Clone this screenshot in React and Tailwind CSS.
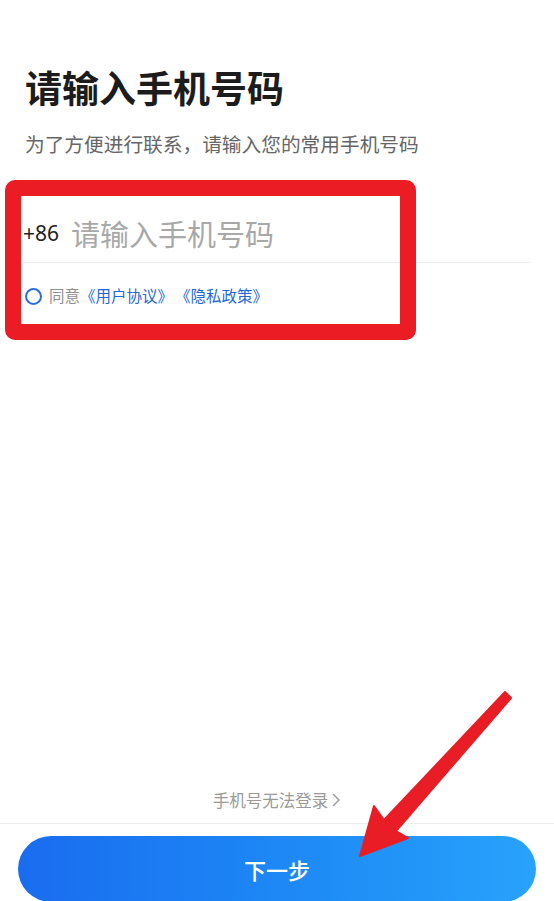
import React from "react";

export default function App() {
  const font = { fontFamily: '"Noto Sans CJK SC", "Noto Sans", sans-serif' };
  return (
    <div
      className="relative h-[901px] w-full overflow-hidden bg-white flex flex-col"
      style={font}
    >
      <div className="px-[25px] pt-[63px]">
        <h1 className="text-[37px] leading-[48px] font-bold text-[#1c1c1c]">
          请输入手机号码
        </h1>
        <p className="mt-[19px] text-[19.7px] leading-[28px] text-[#666666]">
          为了方便进行联系，请输入您的常用手机号码
        </p>
      </div>

      <div className="ml-[23px] mr-[24px] mt-[46px] flex items-center h-[59px] border-b border-[#ececec]">
        <span className="text-[21px] text-[#222222] leading-none" style={{ fontFamily: '"Noto Sans", "Noto Sans CJK SC", sans-serif' }}>+86</span>
        <span className="ml-[12px] text-[29px] text-[#a8a8a8] leading-none">请输入手机号码</span>
      </div>

      <div className="ml-[25px] mt-[22px] flex items-center h-[22px]">
        <span className="w-[17px] h-[17px] rounded-full border-2 border-[#2a6fd8] box-border" />
        <span className="ml-[7px] text-[15.5px] text-[#8f8f8f] leading-none">同意</span>
        <span className="text-[15.5px] text-[#2468d6] leading-none">《用户协议》</span>
        <span className="text-[15.5px] text-[#2468d6] leading-none ml-[2px]">《隐私政策》</span>
      </div>

      <div className="flex-1" />

      <div className="flex items-center justify-center h-[24px] mb-[11px]">
        <span className="text-[16.5px] text-[#9a9a9a] leading-none">手机号无法登录</span>
        <svg width="10" height="16" viewBox="0 0 10 16" className="ml-[3px]">
          <path d="M2 2 L8 8 L2 14" fill="none" stroke="#9a9a9a" strokeWidth="1.4" />
        </svg>
      </div>
      <div className="border-t border-[#ededed]" />
      <div className="px-[18px] pt-[12px] mb-[-1px]">
        <button className="w-full h-[66px] rounded-full bg-gradient-to-r from-[#1a6cef] to-[#28a2fb] text-white text-[22px] font-medium flex items-center justify-center">
          下一步
        </button>
      </div>

      {/* red annotation box */}
      <div className="absolute left-[5px] top-[180px] w-[411px] h-[160px] border-[16px] border-[#ec1c24] rounded-[10px] pointer-events-none" />

      {/* red annotation arrow */}
      <svg
        className="absolute left-0 top-0 pointer-events-none"
        width="554"
        height="901"
        viewBox="0 0 554 901"
      >
        <polygon
          points="505,692 511,698 396,831 408,838 360,856 374,806 384,820"
          fill="#e81d25"
          stroke="#e81d25"
          strokeWidth="2"
          strokeLinejoin="round"
        />
      </svg>
    </div>
  );
}
